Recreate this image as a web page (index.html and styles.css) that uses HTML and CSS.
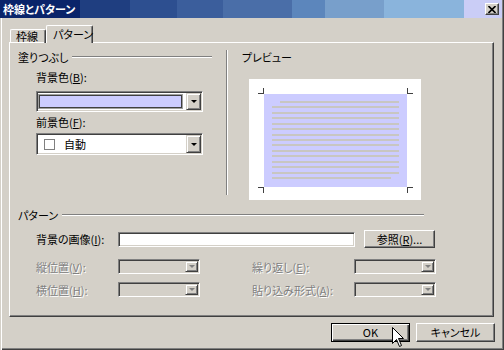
FILE: index.html
```html
<!DOCTYPE html>
<html lang="ja">
<head>
  <meta charset="UTF-8" />
  <title>枠線とパターン</title>
  <link rel="stylesheet" href="styles.css">
</head>
<body>
  <div class="window">
    <div class="titlebar">
      <span class="title">枠線とパターン</span>
      <span class="close">
        <svg width="8" height="7" viewBox="0 0 8 7"><path d="M0.5 0 L7.5 7 M7.5 0 L0.5 7" stroke="#000" stroke-width="1.6"/></svg>
      </span>
    </div>

    <div class="tabs">
      <div class="tab">枠線</div>
      <div class="tab active">パターン</div>
    </div>

    <div class="panel">
      <div class="fill-area">
        <div class="fill-col">
          <div class="group-head"><span>塗りつぶし</span><i class="rule"></i></div>
          <div class="field-label">背景色(<u>B</u>):</div>
          <div class="combo combo-bg">
            <div class="value"><span class="swatch-bg"></span></div>
            <span class="drop"><i class="arrow"></i></span>
          </div>
          <div class="field-label second">前景色(<u>F</u>):</div>
          <div class="combo combo-fg">
            <div class="value"><span class="swatch-auto"></span>自動</div>
            <span class="drop"><i class="arrow"></i></span>
          </div>
        </div>

        <div class="vsep"></div>

        <div class="preview-col">
          <div class="group-head"><span>プレビュー</span></div>
          <div class="preview">
            <svg width="172" height="121" viewBox="0 0 172 121" shape-rendering="crispEdges">
              <rect x="15" y="15" width="143" height="93" fill="#ccccff"/>
              <g fill="#c8c6c2">
                <rect x="31" y="22" width="119" height="2"/>
                <rect x="23" y="27.4" width="127" height="2"/>
                <rect x="23" y="32.9" width="127" height="2"/>
                <rect x="23" y="38.3" width="127" height="2"/>
                <rect x="23" y="43.7" width="127" height="2"/>
                <rect x="23" y="49.1" width="127" height="2"/>
                <rect x="23" y="54.6" width="127" height="2"/>
                <rect x="23" y="60" width="127" height="2"/>
                <rect x="23" y="65.4" width="127" height="2"/>
                <rect x="23" y="70.9" width="127" height="2"/>
                <rect x="23" y="76.3" width="127" height="2"/>
                <rect x="23" y="81.7" width="127" height="2"/>
                <rect x="23" y="87.1" width="127" height="2"/>
                <rect x="23" y="92.6" width="127" height="2"/>
                <rect x="23" y="98" width="119" height="2"/>
              </g>
              <path d="M9 14.5 H15 M14.5 9 V15 M158 14.5 H164 M158.5 9 V15 M9 108.5 H15 M14.5 108 V114 M158 108.5 H164 M158.5 108 V114" stroke="#404040" stroke-width="1" fill="none"/>
            </svg>
          </div>
        </div>
      </div>

      <div class="pattern">
        <div class="group-head"><span>パターン</span><i class="rule"></i></div>

        <div class="row row-image">
          <span class="lbl">背景の画像(<u>I</u>):</span>
          <div class="textbox"></div>
          <button class="btn browse">参照(<u>R</u>)...</button>
        </div>

        <div class="row">
          <span class="lbl disabled">縦位置(<u>V</u>):</span>
          <div class="combo small off"><div class="value"></div><span class="drop"><i class="arrow"></i></span></div>
          <span class="lbl2 disabled">繰り返し(<u>E</u>):</span>
          <div class="combo small off"><div class="value"></div><span class="drop"><i class="arrow"></i></span></div>
        </div>

        <div class="row row-last">
          <span class="lbl disabled">横位置(<u>H</u>):</span>
          <div class="combo small off"><div class="value"></div><span class="drop"><i class="arrow"></i></span></div>
          <span class="lbl2 disabled">貼り込み形式(<u>A</u>):</span>
          <div class="combo small off"><div class="value"></div><span class="drop"><i class="arrow"></i></span></div>
        </div>
      </div>
    </div>

    <div class="buttons">
      <button class="btn default">OK</button>
      <button class="btn">キャンセル</button>
    </div>

    <svg class="cursor" width="13" height="21" viewBox="0 0 13 21">
      <path d="M0.5 0.5 V16.5 L4.5 12.5 L7.5 19.5 L9.5 18.5 L6.5 11.5 H11.5 Z" fill="#fff" stroke="#000" stroke-width="1"/>
    </svg>
  </div>
</body>
</html>
```

FILE: styles.css
```css
* {
  box-sizing: border-box;
}

body {
  margin: 0;
  font-family: "Noto Sans CJK JP", sans-serif;
  font-size: 11px;
  font-feature-settings: "palt";
  color: #000;
  background: #d4d0c8;
}

u {
  text-underline-offset: 1px;
}

.window {
  position: relative;
  width: 504px;
  height: 350px;
  overflow: hidden;
  background: #d4d0c8;
  box-shadow: inset 1px 0 #d4d0c8, inset 2px 0 #fff,
    inset -1px -1px #404040, inset -2px -2px #808080;
}

.titlebar {
  display: flex;
  align-items: center;
  justify-content: space-between;
  width: 502px;
  height: 18px;
  padding: 0 3px 0 3px;
  color: #fff;
  font-weight: bold;
  line-height: 18px;
  background: linear-gradient(to right,
    #0a246a 0 80px, #1f3e80 80px 130px, #2d4f90 130px 177px,
    #3b5e9c 177px 223px, #4a6ea8 223px 292px, #5c86bc 292px 325px,
    #789fcb 325px 384px, #8ab4dc 384px 464px, #cacdf6 464px);
}

.close {
  display: flex;
  align-items: center;
  justify-content: center;
  width: 14px;
  height: 12px;
  background: #d4d0c8;
  border: 1px solid;
  border-color: #fff #404040 #404040 #fff;
  box-shadow: inset -1px -1px #808080;
}

/* tabs */
.tabs {
  display: flex;
  align-items: flex-end;
  height: 18px;
  margin: 7px 0 -1px 10px;
}

.tab {
  width: 36px;
  height: 14px;
  padding-left: 5px;
  line-height: 13px;
  white-space: nowrap;
  border: 1px solid;
  border-color: #fff #404040 transparent #fff;
  border-bottom: 0;
  border-radius: 2px 2px 0 0;
  box-shadow: inset -1px 0 #808080;
}

.tab.active {
  position: relative;
  z-index: 1;
  width: 47px;
  height: 18px;
  padding: 1px 0 0 6px;
  line-height: 14px;
  background: #d4d0c8;
}

.panel {
  width: 485px;
  height: 275px;
  margin-left: 9px;
  padding: 7px 0 0 8px;
  border: 1px solid;
  border-color: #fff #404040 #404040 #fff;
  box-shadow: inset -1px -1px #808080;
}

.group-head {
  display: flex;
  align-items: center;
  height: 14px;
  line-height: 14px;
}

.rule {
  flex: 1;
  height: 0;
  margin: 0 1px 0 4px;
  border-top: 1px solid #808080;
  border-bottom: 1px solid #fff;
}

/* fill + preview */
.fill-area {
  display: flex;
  height: 150px;
}

.fill-col {
  width: 195px;
}

.field-label {
  height: 14px;
  margin: 6px 0 0 18px;
  line-height: 14px;
}

.field-label.second {
  margin-top: 3px;
}

.combo {
  display: flex;
  background: #fff;
  border: 1px solid;
  border-color: #808080 #fff #fff #808080;
  box-shadow: inset 1px 1px #404040, inset -1px -1px #d4d0c8;
  padding: 1px;
}

.combo .value {
  flex: 1;
  display: flex;
  align-items: center;
}

.drop {
  display: flex;
  align-items: center;
  justify-content: center;
  width: 15px;
  background: #d4d0c8;
  border: 1px solid;
  border-color: #d4d0c8 #404040 #404040 #d4d0c8;
  box-shadow: inset 1px 1px #fff, inset -1px -1px #808080;
}

.arrow {
  width: 0;
  height: 0;
  border-left: 3px solid transparent;
  border-right: 3px solid transparent;
  border-top: 3px solid #000;
}

.combo-bg {
  width: 167px;
  height: 21px;
  margin: 7px 0 0 18px;
}

.combo-bg .value {
  padding: 2px 4px 2px 1px;
}

.swatch-bg {
  width: 100%;
  height: 100%;
  background: #ccccff;
  border: 1px solid #404040;
  box-shadow: 0 0 0 1px #a0a0a0;
}

.combo-fg {
  width: 167px;
  height: 22px;
  margin: 4px 0 0 18px;
}

.combo-fg .value {
  padding-left: 6px;
}

.swatch-auto {
  width: 11px;
  height: 11px;
  margin-right: 9px;
  background: #fff;
  border: 1px solid #808080;
}

.vsep {
  width: 2px;
  height: 145px;
  margin-left: 13px;
  border-left: 1px solid #808080;
  border-right: 1px solid #fff;
}

.preview-col {
  margin-left: 14px;
}

.preview {
  width: 172px;
  height: 121px;
  margin: 15px 0 0 7px;
  background: #fff;
}

.preview svg {
  display: block;
}

/* pattern */
.pattern {
  margin-top: 8px;
}

.pattern .group-head {
  width: 407px;
}

.row {
  display: flex;
  align-items: center;
  height: 15px;
  margin: 11px 0 0 18px;
}

.row-image {
  height: 18px;
  margin-top: 8px;
}

.row-last {
  margin-top: 8px;
}

.lbl {
  width: 82px;
  white-space: nowrap;
}

.lbl2 {
  width: 102px;
  margin-left: 52px;
  white-space: nowrap;
}

.disabled {
  color: #808080;
  text-shadow: 1px 1px #fff;
}

.textbox {
  width: 237px;
  height: 15px;
  background: #fff;
  border: 1px solid;
  border-color: #808080 #fff #fff #808080;
  box-shadow: inset 1px 1px #404040, inset -1px -1px #d4d0c8;
}

.combo.small {
  width: 82px;
  height: 15px;
}

.combo.off {
  background: #d4d0c8;
}

.combo.small .drop {
  width: 13px;
}

.combo.off .arrow {
  border-top-color: #808080;
}

/* buttons */
.btn {
  font: inherit;
  font-feature-settings: "palt";
  color: #000;
  padding: 0;
  background: #d4d0c8;
  border: 1px solid;
  border-color: #fff #404040 #404040 #fff;
  box-shadow: inset -1px -1px #808080;
}

.browse {
  width: 71px;
  height: 18px;
  margin-left: 9px;
  line-height: 14px;
}

.buttons {
  display: flex;
  justify-content: flex-end;
  gap: 6px;
  margin-top: 6px;
  padding-right: 9px;
}

.buttons .btn {
  width: 79px;
  height: 19px;
  line-height: 15px;
}

.btn.default {
  border-color: #000;
  box-shadow: inset 1px 1px #fff, inset -1px -1px #404040, inset -2px -2px #808080;
}

.cursor {
  position: absolute;
  left: 392px;
  top: 327px;
}
```
